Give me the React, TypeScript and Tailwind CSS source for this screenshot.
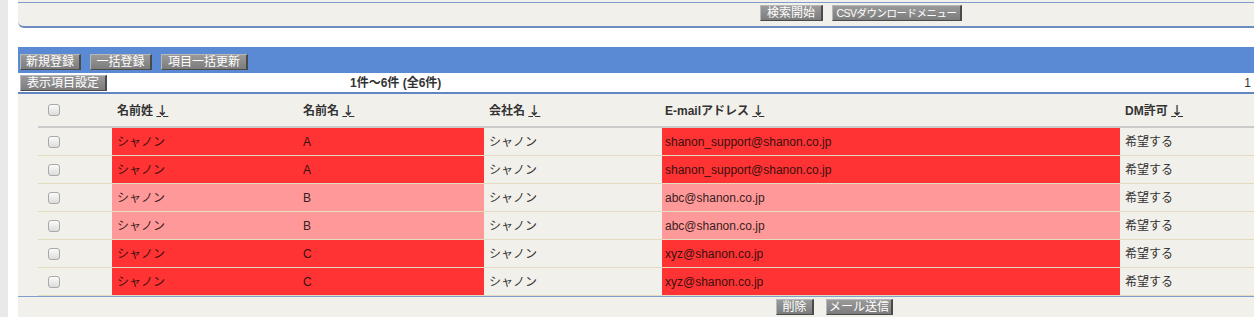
const font = { fontFamily: '"Liberation Sans", "Noto Sans CJK JP", sans-serif' }

function Btn({ label, w }: { label: string; w: string }) {
  return (
    <span
      className={
        'inline-flex h-[16px] shrink-0 items-center justify-center overflow-hidden whitespace-nowrap border-t border-l border-t-[#b8b8b8] border-l-[#b8b8b8] border-r-2 border-b border-r-[#4a4a4a] border-b-[#4a4a4a] bg-gradient-to-b from-[#9a9a9a] to-[#7c7c7c] leading-none text-white ' +
        w
      }
    >
      {label}
    </span>
  )
}

function Box() {
  return <span className="inline-block h-[12px] w-[12px] rounded-[3px] border border-[#a9a9a9] bg-gradient-to-b from-[#fbfbfb] to-[#dcdcdc]" />
}

interface Row {
  sei: string
  mei: string
  company: string
  email: string
  dm: string
  tone: 'dark' | 'light'
}

const rows: Row[] = [
  { sei: 'シャノン', mei: 'A', company: 'シャノン', email: 'shanon_support@shanon.co.jp', dm: '希望する', tone: 'dark' },
  { sei: 'シャノン', mei: 'A', company: 'シャノン', email: 'shanon_support@shanon.co.jp', dm: '希望する', tone: 'dark' },
  { sei: 'シャノン', mei: 'B', company: 'シャノン', email: 'abc@shanon.co.jp', dm: '希望する', tone: 'light' },
  { sei: 'シャノン', mei: 'B', company: 'シャノン', email: 'abc@shanon.co.jp', dm: '希望する', tone: 'light' },
  { sei: 'シャノン', mei: 'C', company: 'シャノン', email: 'xyz@shanon.co.jp', dm: '希望する', tone: 'dark' },
  { sei: 'シャノン', mei: 'C', company: 'シャノン', email: 'xyz@shanon.co.jp', dm: '希望する', tone: 'dark' },
]

function Head({ label }: { label: string }) {
  return (
    <span className="font-bold">
      {label}{' '}
      <span className="font-['Noto_Sans_CJK_JP',sans-serif] underline decoration-1 underline-offset-[1px]">↓</span>
    </span>
  )
}

export default function App() {
  return (
    <div className="flex h-[317px] w-[1254px] overflow-hidden bg-white text-[12px] text-[#333]" style={font}>
      <div className="w-[8px] shrink-0 bg-[#e9e9e9]" />
      <div className="w-[10px] shrink-0 bg-white" />
      <div className="flex min-w-0 flex-1 flex-col">
        {/* search panel */}
        <div className="h-[2px] bg-[#f2f0eb]" />
        <div className="flex h-[26px] gap-[9px] rounded-bl-[6px] border-t border-b-2 border-t-[#7f9ccb] border-b-[#6c8bbf] bg-[#f2f0eb] pt-[2px] pl-[742px]">
          <Btn label="検索開始" w="w-[63px] text-[12px]" />
          <Btn label="CSVダウンロードメニュー" w="w-[130px] text-[10.5px] tracking-[-0.5px]" />
        </div>
        <div className="h-[19px]" />
        {/* toolbar */}
        <div className="flex h-[26px] items-end gap-[9px] bg-[#5a8ad4] pb-[3px] pl-[2px]">
          <Btn label="新規登録" w="w-[61px] text-[12px]" />
          <Btn label="一括登録" w="w-[62px] text-[12px]" />
          <Btn label="項目一括更新" w="w-[87px] text-[12px]" />
        </div>
        <div className="flex h-[19px] items-center">
          <span className="ml-[2px] flex">
            <Btn label="表示項目設定" w="w-[87px] text-[12px]" />
          </span>
          <span className="ml-[243px] font-bold">1件～6件 (全6件)</span>
          <span className="ml-auto mr-[3px]">1</span>
        </div>
        <div className="h-[2px] bg-[#5f86c2]" />
        {/* table */}
        <div className="flex-1 bg-[#f2f0eb] pl-[20px]">
          <div className="grid grid-cols-[74px_186px_186px_178px_458px_1fr]">
            <div className="flex h-[34px] items-center border-b-2 border-[#cacaca] pl-[10px]"><Box /></div>
            <div className="flex h-[34px] items-center border-b-2 border-[#cacaca] pl-[5px]"><Head label="名前姓" /></div>
            <div className="flex h-[34px] items-center border-b-2 border-[#cacaca] pl-[5px]"><Head label="名前名" /></div>
            <div className="flex h-[34px] items-center border-b-2 border-[#cacaca] pl-[5px]"><Head label="会社名" /></div>
            <div className="flex h-[34px] items-center border-b-2 border-[#cacaca] pl-[3px]"><Head label="E-mailアドレス" /></div>
            <div className="flex h-[34px] items-center border-b-2 border-[#cacaca] pl-[5px]"><Head label="DM許可" /></div>
            {rows.map((r, i) => {
              const bg = r.tone === 'dark' ? 'bg-[#ff3333] text-[#3a1010]' : 'bg-[#ff9999] text-[#3a2020]'
              const line = 'border-b border-[#e3dcc0]'
              return [
                <div key={i + 'c'} className={'flex h-[28px] items-center pl-[10px] ' + line}><Box /></div>,
                <div key={i + 's'} className={'flex h-[28px] items-center pl-[5px] ' + bg + ' ' + line}>{r.sei}</div>,
                <div key={i + 'm'} className={'flex h-[28px] items-center pl-[5px] ' + bg + ' ' + line}>{r.mei}</div>,
                <div key={i + 'co'} className={'flex h-[28px] items-center pl-[5px] ' + line}>{r.company}</div>,
                <div key={i + 'e'} className={'flex h-[28px] items-center pl-[3px] ' + bg + ' ' + line}>{r.email}</div>,
                <div key={i + 'd'} className={'flex h-[28px] items-center pl-[5px] ' + line}>{r.dm}</div>,
              ]
            })}
          </div>
          <div className="ml-[-20px] h-px bg-[#7f9ccb]" />
          <div className="flex gap-[12px] pt-[2px] pl-[738px]">
            <Btn label="削除" w="w-[38px] text-[12px]" />
            <Btn label="メール送信" w="w-[67px] text-[12px]" />
          </div>
        </div>
      </div>
    </div>
  )
}
